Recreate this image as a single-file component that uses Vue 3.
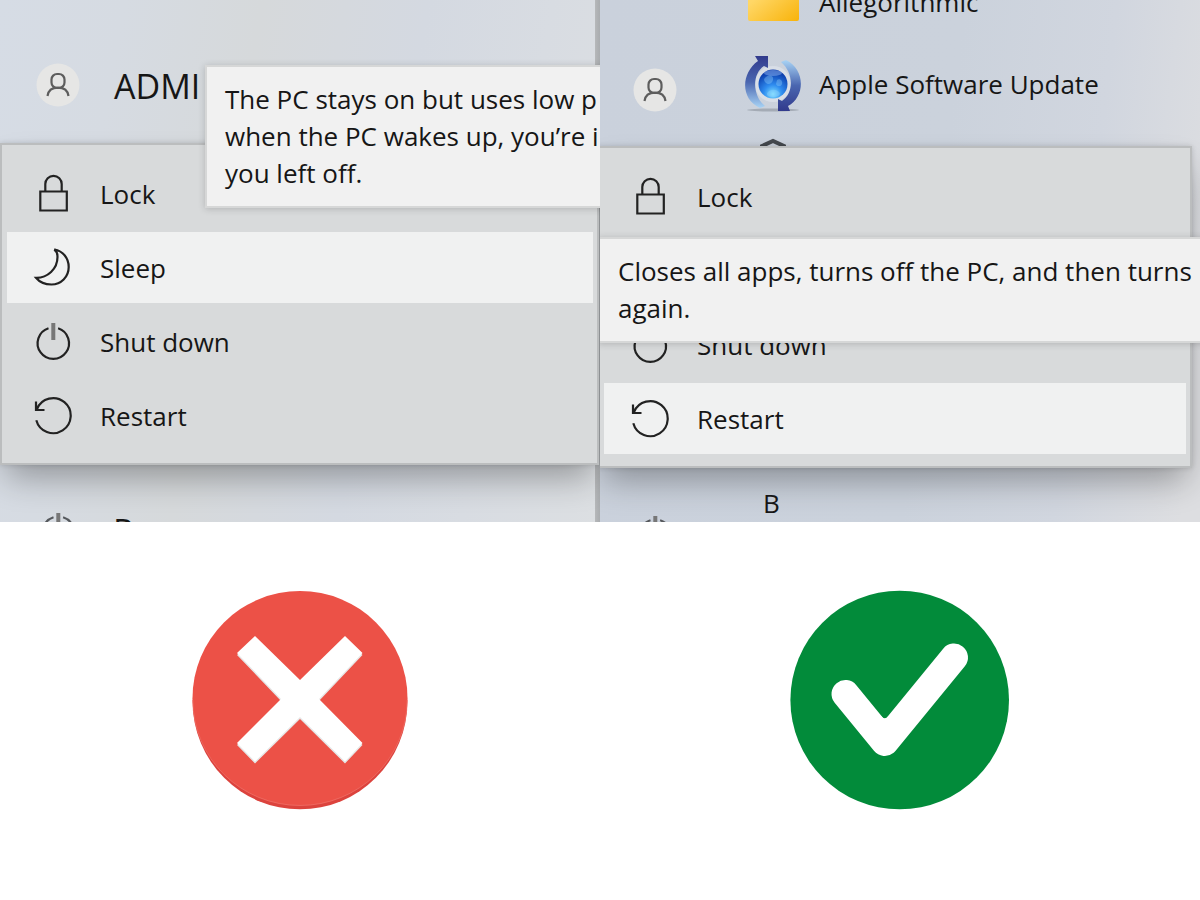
<template>
  <main class="compare">
    <section v-for="p in panels" :key="p.id" :class="['column', p.id]">
      <div class="screen">
        <div class="start-top">
          <div class="account">
            <svg class="avatar" viewBox="0 0 44 44" aria-hidden="true">
              <circle cx="22" cy="22" r="21.5" fill="#e6e6e5" />
              <rect x="15.5" y="11" width="13" height="14" rx="5.5" />
              <path d="M11.5 33c.8-5.600 4.500-8.300 10.500-8.300S31.700 27.400 32.500 33" />
            </svg>
            <span v-if="p.account" class="account-name">{{ p.account }}</span>
          </div>
          <ul v-if="p.apps.length" class="apps">
            <li v-for="app in p.apps" :key="app.icon" class="app">
              <svg v-if="app.icon === 'folder'" class="app-icon" viewBox="0 0 56 56" aria-hidden="true">
                <defs>
                  <linearGradient id="folder" x1="0" y1="0" x2="1" y2="1">
                    <stop offset="0.300" stop-color="#ffd766" />
                    <stop offset="1" stop-color="#f8b30a" />
                  </linearGradient>
                </defs>
                <rect x="3" y="6" width="51" height="41" rx="2" fill="url(#folder)" />
              </svg>
              <svg v-else-if="app.icon === 'update'" class="app-icon" viewBox="0 0 56 56" aria-hidden="true">
                <defs>
                  <radialGradient id="globe" cx="0.5" cy="0.85" r="0.8">
                    <stop offset="0" stop-color="#7fe0ff" />
                    <stop offset="0.400" stop-color="#2f8df0" />
                    <stop offset="1" stop-color="#0836a6" />
                  </radialGradient>
                  <linearGradient id="arrowUp" x1="0" y1="0" x2="0" y2="1">
                    <stop offset="0" stop-color="#313a8c" />
                    <stop offset="0.5" stop-color="#4a66b0" />
                    <stop offset="1" stop-color="#a9d4f5" />
                  </linearGradient>
                  <linearGradient id="arrowDown" x1="0" y1="1" x2="0" y2="0">
                    <stop offset="0" stop-color="#313a8c" />
                    <stop offset="0.5" stop-color="#4a66b0" />
                    <stop offset="1" stop-color="#a9d4f5" />
                  </linearGradient>
                </defs>
                <ellipse cx="28" cy="54" rx="26" ry="1.500" fill="#a4abb5" />
                <circle cx="28" cy="28" r="18" fill="#d8dee7" />
                <path d="M10 0h13v12l-4-2C7 18 7 39 20 50l-5 2C-5 43-4 17 13 5z" fill="url(#arrowUp)" />
                <path d="M45 55H33V43l4 2C49 37 49 17 36 6l5-2c20 10 19 37 2 46z" fill="url(#arrowDown)" />
                <circle cx="28" cy="28" r="14.500" fill="url(#globe)" />
                <path d="M21 21c4-3 8-1 7 3s-5 5-7 3-3-4 0-6zM32 24c3-2 6 1 5 4s-5 3-6 0zM23 36c3-3 8-3 11 0s-2 5-6 5-8-2-5-5z" fill="#9ad8ff" opacity="0.350" />
                <ellipse cx="28" cy="17" rx="9" ry="3" fill="#7aa3e6" opacity="0.6" />
              </svg>
              <svg v-else class="app-icon" viewBox="0 0 56 56" aria-hidden="true">
                <path d="M17 8l11-5 11 5v14l-11 6-11-6z" fill="none" stroke="#45494e" stroke-width="4" />
              </svg>
              <span>{{ app.name }}</span>
            </li>
          </ul>
        </div>

        <div class="menu" role="menu">
          <button
            v-for="item in items"
            :key="item.icon"
            type="button"
            role="menuitem"
            :class="['item', { active: item.icon === p.active }]"
          >
            <svg class="icon" viewBox="0 0 40 40" aria-hidden="true">
              <path v-for="d in icons[item.icon]" :key="d" :d="d" />
              <path v-if="item.icon === 'power'" class="stem" d="M20.300 1v17" />
            </svg>
            <span>{{ item.label }}</span>
          </button>
        </div>

        <div class="start-bottom">
          <svg class="icon dim" viewBox="0 0 40 40" aria-hidden="true">
            <path v-for="d in icons.power" :key="d" :d="d" />
            <path class="stem" d="M20.300 2v17" />
          </svg>
          <span class="below">{{ p.below }}</span>
        </div>

        <div class="tooltip" role="tooltip">
          <div v-for="line in p.tooltip" :key="line">{{ line }}</div>
        </div>
      </div>

      <div class="verdict">
        <svg v-if="p.id === 'wrong'" class="mark" viewBox="0 0 240 240" role="img">
          <circle cx="120" cy="122" r="107.300" fill="#dc433d" />
          <ellipse cx="120" cy="118.300" rx="107.500" ry="107.300" fill="#ec5147" />
          <path d="M12.800 120a107.200 105.500 0 0 0 214.400 0" fill="none" stroke="#f0746c" stroke-width="0.700" />
          <path :d="cross" fill="#e6e6e6" />
          <path :d="cross" fill="#fff" transform="translate(0 -2)" />
        </svg>
        <svg v-else class="mark" viewBox="0 0 240 240" role="img">
          <circle cx="119.700" cy="120" r="109.300" fill="#028b3a" />
          <path
            d="M65.500 114L104.800 162L174 77.500"
            fill="none"
            stroke="#fff"
            stroke-width="28"
            stroke-linecap="round"
            stroke-linejoin="round"
          />
          <path d="M101 136q3.800 4.500 7.600 0v8h-7.600z" fill="#fff" />
        </svg>
      </div>
    </section>
  </main>
</template>

<script setup>
const items = [
  { icon: 'lock', label: 'Lock' },
  { icon: 'moon', label: 'Sleep' },
  { icon: 'power', label: 'Shut down' },
  { icon: 'restart', label: 'Restart' },
]

const icons = {
  lock: ['M7.300 17.500h26.500v19H7.300z', 'M12.300 17.500V10a8.200 8.200 0 0 1 16.400 0v7.500'],
  moon: [
    'M21.300 1.500C30 3 35.700 10 35.700 19C35.700 29 28 36.500 18.500 36.500C11.500 36.500 6 33.500 3 29.800C14.500 30 24.500 21 24.500 9C24.500 5.500 23.500 3 21.300 1.500Z',
  ],
  power: ['M15.500 6.300A15.700 15.700 0 1 0 25.100 6.300'],
  restart: ['M3.300 24.200A17.500 17.500 0 1 0 4 13', 'M3 5.500V14H11.500'],
}

const cross =
  'M75 58L120 102L165 58L182.500 75L139 121L182.500 165L165 183.500L120 139L75 183.500L57 165L101 121L57 75Z'

const panels = [
  {
    id: 'wrong',
    account: 'ADMI',
    apps: [],
    active: 'moon',
    below: 'P',
    tooltip: ['The PC stays on but uses low p', 'when the PC wakes up, you’re i', 'you left off.'],
  },
  {
    id: 'right',
    account: '',
    apps: [
      { icon: 'folder', name: 'Allegorithmic' },
      { icon: 'update', name: 'Apple Software Update' },
      { icon: 'box', name: '' },
    ],
    active: 'restart',
    below: 'B',
    tooltip: ['Closes all apps, turns off the PC, and then turns', 'again.'],
  },
]
</script>

<style>
body {
  margin: 0;
  background: #fff;
}
</style>

<style scoped>
.compare {
  display: grid;
  grid-template-columns: 1fr 1fr;
  min-height: 100vh;
  font-family: "Open Sans", "Noto Sans", sans-serif;
  font-size: 26px;
  line-height: 37px;
  color: #161616;
}
.column {
  display: grid;
  grid-template-rows: 58fr 42fr;
  min-width: 0;
}
.screen {
  position: relative;
  display: flex;
  flex-direction: column;
  overflow: hidden;
}
.wrong .screen {
  background:
    linear-gradient(to left, #a9acaf 0, #b6b8ba 5px, transparent 5px),
    linear-gradient(100deg, #d6dce5 0%, #d6dbe2 18%, #d6d9db 38%, #d4d9e1 62%, #d8dce2 80%, #dcdfe2 100%);
}
.right .screen {
  background: linear-gradient(97deg, #cad1dc 0%, #cbd2dc 55%, #d1d6df 78%, #dddee1 97%);
}
.start-top {
  display: flex;
  align-items: flex-start;
  height: 143px;
  overflow: hidden;
}
.right .start-top {
  height: 146px;
}
.account {
  display: flex;
  align-items: center;
  gap: 34px;
  padding: 62px 0 0 36px;
}
.right .account {
  padding: 68px 0 0 33px;
}
.account-name {
  padding-top: 2px;
  font-size: 34px;
  line-height: 44px;
}
.avatar {
  width: 44px;
  height: 44px;
  fill: none;
  stroke: #5d5d5d;
  stroke-width: 2.2;
}
.avatar circle {
  stroke: none;
}
.apps {
  list-style: none;
  margin: -39px 0 0 68px;
  padding: 0;
}
.app {
  display: flex;
  align-items: center;
  gap: 18px;
  height: 82px;
  white-space: nowrap;
}
.app-icon {
  width: 56px;
  height: 56px;
}
.menu {
  display: flex;
  flex-direction: column;
  gap: 3px;
  margin: 0 1px 0 0;
  padding: 13px 4px 12px 5px;
  border: 2px solid #bbbdbe;
  background: #d8dadb;
  box-shadow:
    0 0 5px rgba(0, 0, 0, 0.15),
    0 18px 32px -6px rgba(0, 0, 0, 0.32);
}
.right .menu {
  margin: 0 8px 0 -3px;
}
.item {
  display: flex;
  align-items: center;
  gap: 27px;
  height: 71px;
  padding: 0 0 0 26px;
  border: 0;
  background: transparent;
  color: inherit;
  font: inherit;
  text-align: left;
}
.item span {
  padding-top: 2px;
}
.item.active {
  background: #f0f1f1;
}
.icon {
  width: 40px;
  height: 40px;
  flex: none;
  fill: none;
  stroke: #222;
  stroke-width: 2.2;
}
.icon .stem {
  stroke: #777;
  stroke-width: 4;
}
.icon.dim {
  stroke: #55585c;
}
.start-bottom {
  display: flex;
  align-items: flex-start;
  flex: 1 1 0;
  min-height: 54px;
  max-height: 57px;
  overflow: hidden;
  padding-left: 38px;
  box-sizing: border-box;
}
.right .start-bottom {
  padding-left: 35px;
}
.start-bottom .icon {
  margin-top: 46px;
}
.wrong .below {
  padding: 44px 0 0 35px;
  font-size: 34px;
  line-height: 44px;
}
.right .below {
  padding: 17px 0 0 88px;
}
.tooltip {
  position: absolute;
  padding: 14px 18px;
  border: 2px solid #d6d7d7;
  background: #f1f1f1;
  box-shadow: 0 1px 7px rgba(0, 0, 0, 0.18);
  white-space: nowrap;
}
.wrong .tooltip {
  top: 65px;
  left: 205px;
  right: -20px;
}
.right .tooltip {
  top: 237px;
  left: -2px;
  right: -20px;
}
.verdict {
  display: flex;
  justify-content: center;
  align-items: flex-start;
  padding-top: 58px;
}
.mark {
  width: 240px;
  height: 240px;
}
</style>
